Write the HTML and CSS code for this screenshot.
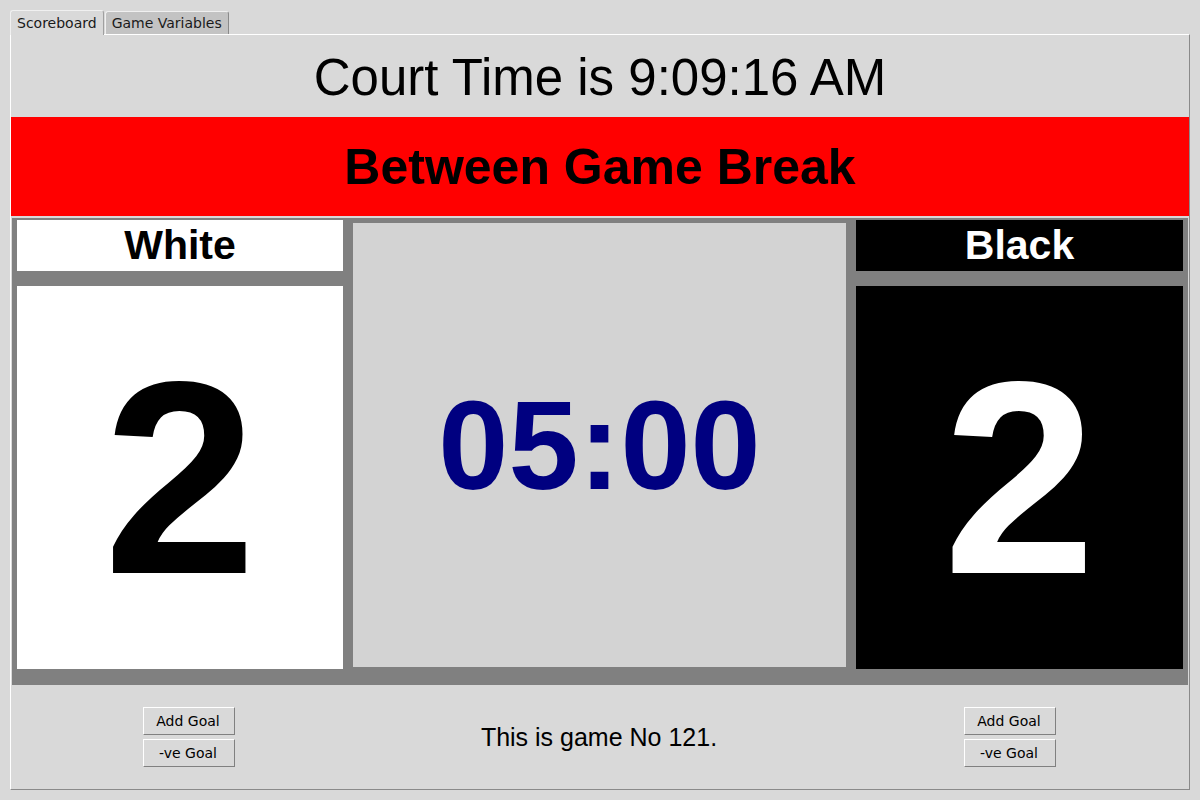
FILE: index.html
```html
<!DOCTYPE html>
<html>
<head>
<meta charset="utf-8">
<title>Scoreboard</title>
<link rel="stylesheet" href="styles.css">
</head>
<body>
<div class="app">
  <div class="tabs">
    <div class="tab tab-active">Scoreboard</div>
    <div class="tab">Game Variables</div>
  </div>
  <div class="panel">
    <div class="court-time">Court Time is 9:09:16 AM</div>
    <div class="status">Between Game Break</div>
    <div class="board">
      <div class="team">
        <div class="team-name name-white">White</div>
        <div class="team-score score-white">2</div>
      </div>
      <div class="clock-cell">
        <div class="clock">05:00</div>
      </div>
      <div class="team">
        <div class="team-name name-black">Black</div>
        <div class="team-score score-black">2</div>
      </div>
    </div>
    <div class="controls">
      <div class="btn-group">
        <button class="btn">Add Goal</button>
        <button class="btn">-ve Goal</button>
      </div>
      <div class="game-no">This is game No 121.</div>
      <div class="btn-group">
        <button class="btn">Add Goal</button>
        <button class="btn">-ve Goal</button>
      </div>
    </div>
  </div>
</div>
</body>
</html>
```
FILE: styles.css
```css
html, body {
  margin: 0;
  padding: 0;
  background: #d9d9d9;
}
body {
  width: 1200px;
  height: 800px;
  overflow: hidden;
  font-family: "Liberation Sans", Arial, sans-serif;
}
.app {
  padding: 10px 10px 0 10px;
}
.tabs {
  display: flex;
  align-items: flex-end;
  height: 24px;
  position: relative;
  z-index: 1;
}
.tab {
  font-family: "DejaVu Sans", sans-serif;
  font-size: 14px;
  color: #1a1a1a;
  height: 22px;
  line-height: 22px;
  padding: 0 6px;
  background: #c3c3c3;
  border: 1px solid #f0f0f0;
  border-bottom: none;
  border-right-color: #8a8a8a;
  border-radius: 3px 3px 0 0;
  margin-left: 1px;
}
.tab-active {
  background: #d9d9d9;
  height: 24px;
  line-height: 24px;
  padding: 0 6px 0 6px;
  margin-left: 0;
  border-right: 1px solid #a0a0a0;
  margin-bottom: -1px;
}
.panel {
  height: 754px;
  border-top: 1px solid #ffffff;
  border-left: 1px solid #ffffff;
  border-right: 1px solid #8a8a8a;
  border-bottom: 1px solid #8a8a8a;
  display: flex;
  flex-direction: column;
}
.court-time {
  height: 82px;
  display: flex;
  align-items: center;
  justify-content: center;
  font-size: 51px;
  color: #000;
  padding-top: 2px;
  box-sizing: border-box;
}
.status {
  height: 99px;
  background: #ff0000;
  display: flex;
  align-items: center;
  justify-content: center;
  font-size: 50px;
  font-weight: bold;
  color: #000;
}
.board {
  margin: 2px 1px 0 1px;
  height: 467px;
  box-sizing: border-box;
  background: #808080;
  display: grid;
  grid-template-columns: 326px 493px 327px;
  column-gap: 10px;
  padding: 2px 5px 0 5px;
}
.team {
  display: flex;
  flex-direction: column;
}
.team-name {
  height: 51px;
  display: flex;
  align-items: center;
  justify-content: center;
  font-size: 41px;
  font-weight: bold;
}
.team-score {
  margin-top: 15px;
  height: 383px;
  display: flex;
  align-items: center;
  justify-content: center;
  font-size: 275px;
  font-weight: bold;
  padding-top: 1px;
  box-sizing: border-box;
}
.name-white, .score-white {
  background: #ffffff;
  color: #000000;
}
.name-black, .score-black {
  background: #000000;
  color: #ffffff;
}
.clock-cell {
  margin-top: 3px;
  height: 444px;
  background: #d3d3d3;
  display: flex;
  align-items: center;
  justify-content: center;
}
.clock {
  font-size: 126px;
  font-weight: bold;
  color: #000080;
}
.controls {
  flex: 1;
  display: grid;
  grid-template-columns: 356px 1fr 358px;
  align-items: center;
}
.btn-group {
  display: flex;
  flex-direction: column;
  align-items: center;
  gap: 4px;
}
.btn {
  width: 92px;
  height: 28px;
  box-sizing: border-box;
  background: #d9d9d9;
  border: 1px solid;
  border-color: #ffffff #808080 #808080 #ffffff;
  font-family: "DejaVu Sans", sans-serif;
  font-size: 14px;
  color: #000;
  padding: 0 2px 0 0;
  margin: 0;
}
.game-no {
  text-align: center;
  font-size: 25px;
  color: #000;
}
```
